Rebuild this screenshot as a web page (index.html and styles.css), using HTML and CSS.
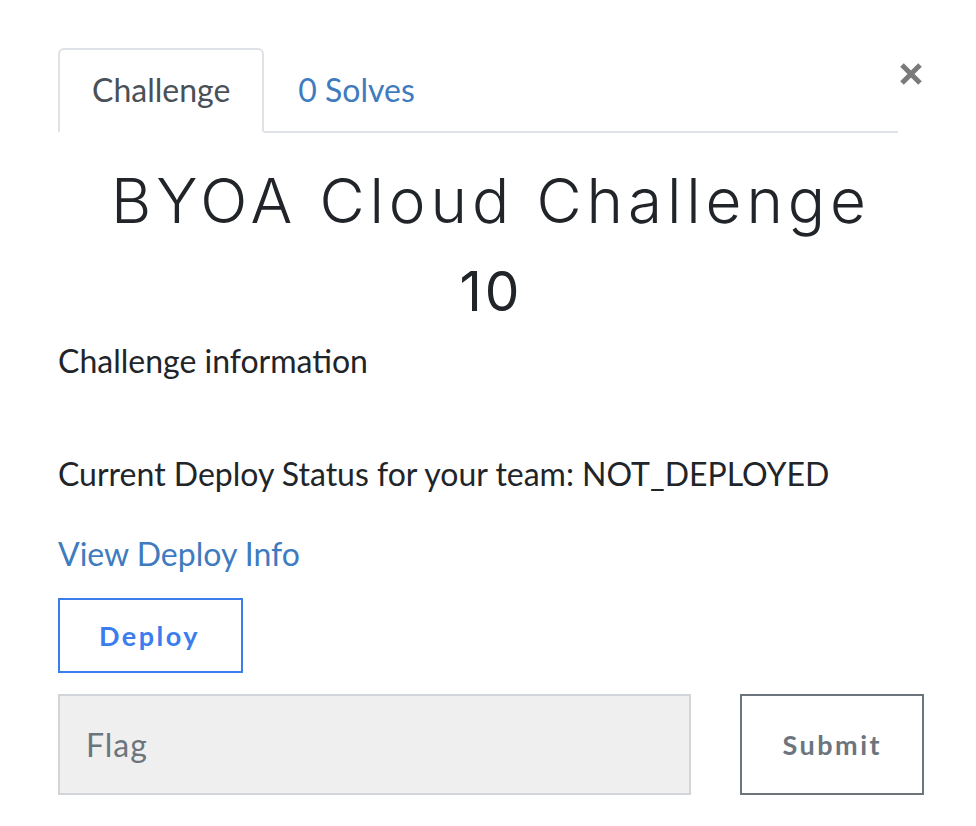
FILE: index.html
```html
<!DOCTYPE html>
<html lang="en">
<head>
<meta charset="utf-8">
<title>BYOA Cloud Challenge</title>
<link rel="stylesheet" href="styles.css">
</head>
<body>
<div class="modal">
  <div class="header">
    <ul class="tabs">
      <li class="tab active">Challenge</li>
      <li class="tab link">0 Solves</li>
    </ul>
    <button class="close" aria-label="Close">
      <svg width="24" height="24" viewBox="0 0 24 24"><path d="M3 3 L21 21 M21 3 L3 21" stroke="#7a7a7a" stroke-width="5" stroke-linecap="butt"/></svg>
    </button>
  </div>
  <h1 class="title">BYOA Cloud Challenge</h1>
  <div class="value">10</div>
  <p class="desc">Challenge information</p>
  <p class="status">Current Deploy Status for your team: NOT_DEPLOYED</p>
  <a class="info" href="#">View Deploy Info</a>
  <div class="deploy-row"><button class="btn-deploy">Deploy</button></div>
  <div class="flag-row">
    <input class="flag" type="text" placeholder="Flag">
    <button class="btn-submit">Submit</button>
  </div>
</div>
</body>
</html>
```
FILE: styles.css
```css
* { box-sizing: border-box; }
html, body { margin: 0; padding: 0; background: #fff; }
body { font-family: Lato, "Noto Sans", sans-serif; color: #212529; }
.modal { padding: 48px 52px 0 58px; }
.header { display: flex; align-items: flex-start; }
.tabs { flex: 1; display: flex; list-style: none; margin: 0; padding: 0; border-bottom: 2px solid #dee2e6; }
.tab { font-size: 32px; line-height: 40px; padding: 20px 32px 21px; margin-bottom: -2px; border: 2px solid transparent; border-radius: 6px 6px 0 0; }
.tab.active { color: #495057; border-color: #dee2e6 #dee2e6 #fff; background: #fff; }
.tab.link { color: #3e7bbf; }
.close { background: none; border: 0; padding: 0; margin: 14px 0 0 1px; width: 25px; height: 24px; cursor: pointer; }
.close svg { display: block; }
.title { font-family: Inter, "Open Sans", sans-serif; font-weight: 300; font-size: 62px; letter-spacing: 4.9px; line-height: 88px; text-align: center; margin: 24px 0 0; }
.value { font-family: Inter, "Open Sans", sans-serif; font-weight: 400; font-size: 55px; letter-spacing: 3px; line-height: 88px; text-align: center; margin-top: 2px; }
.desc { font-size: 32px; line-height: 40px; margin: 6px 0 0; }
.status { font-size: 32px; line-height: 40px; margin: 73px 0 0; }
.info { display: block; font-size: 32px; line-height: 40px; color: #3e7bbf; text-decoration: none; margin-top: 40px; }
.deploy-row { margin-top: 24px; }
.btn-deploy { display: block; font-family: Lato, sans-serif; font-weight: 700; font-size: 27px; letter-spacing: 2.5px; color: #3b7ded; background: #fff; border: 2px solid #3b7ded; width: 185px; height: 75px; padding: 0 2px 0 0; }
.flag-row { display: flex; gap: 49px; margin-top: 21px; }
.flag { width: 635px; height: 101px; background: #efefef; border: 2px solid #d1d5da; padding: 0 26px; font-family: Lato, sans-serif; font-size: 32px; letter-spacing: 1px; color: #495057; }
.flag::placeholder { color: #6c757d; }
.btn-submit { width: 184px; height: 101px; background: #fff; border: 2px solid #6c757d; font-family: Lato, sans-serif; font-weight: 700; font-size: 27px; letter-spacing: 2.5px; color: #6c757d; padding: 0; }
```
